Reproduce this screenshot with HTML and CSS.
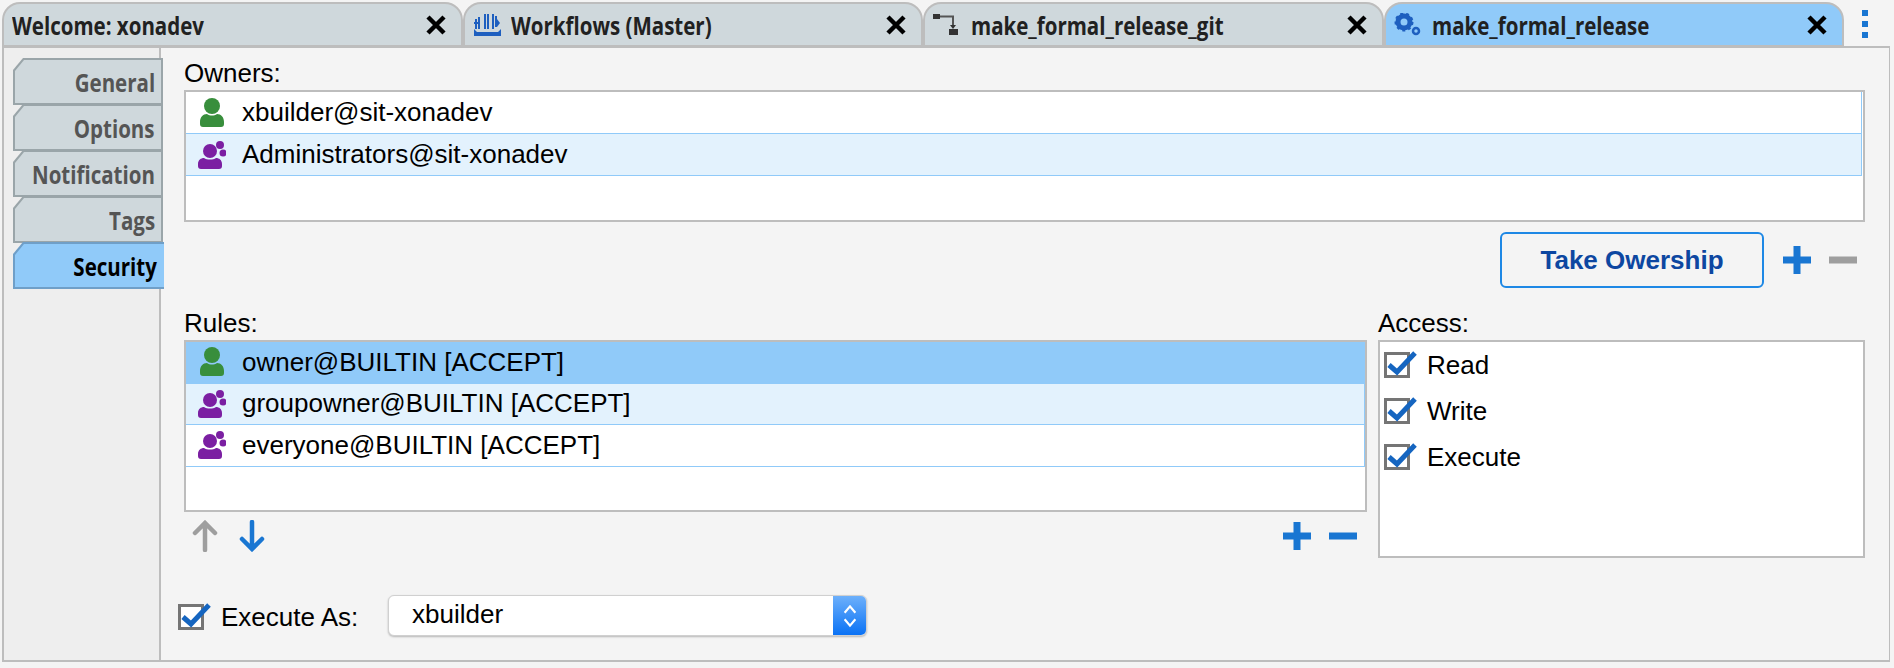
FILE: index.html
```html
<!DOCTYPE html>
<html lang="en">
<head>
  <meta charset="UTF-8">
  <title>make_formal_release</title>
  <link rel="stylesheet" href="styles.css">
</head>
<body>
  <svg class="defs" width="0" height="0">
    <symbol id="user" viewBox="0 0 26 30">
      <circle cx="13" cy="8" r="8" fill="#388e3c"/>
      <path d="M1 24c0-5 3-8 7-8 3 2 7 2 10 0 4 0 7 3 7 8v2c0 2-1 3-3 3H4c-2 0-3-1-3-3z" fill="#388e3c"/>
    </symbol>
    <symbol id="group" viewBox="0 0 28 30">
      <circle cx="12" cy="11" r="7" fill="#7b1fa2"/>
      <circle cx="22" cy="5" r="4" fill="#7b1fa2"/>
      <circle cx="25" cy="13" r="3.5" fill="#7b1fa2"/>
      <path d="M0 24c0-4 3-6 6-6 3 2 9 2 12 0 3 0 6 2 6 6v2c0 2-1 3-3 3H3c-2 0-3-1-3-3z" fill="#7b1fa2"/>
    </symbol>
    <symbol id="check" viewBox="0 0 33 28">
      <rect x="1.5" y="2.5" width="23" height="23" fill="#fff" stroke="#757575" stroke-width="3"/>
      <path d="M5 14l8 7L31 2" fill="none" stroke="#1565c0" stroke-width="5"/>
    </symbol>
    <symbol id="close" viewBox="0 0 22 22">
      <path d="M3 3l16 16M19 3L3 19" stroke="#000" stroke-width="4.5"/>
    </symbol>
    <symbol id="plus" viewBox="0 0 24 24">
      <path d="M0 12h24M12 0v24" stroke="#1976d2" stroke-width="6"/>
    </symbol>
    <symbol id="minus" viewBox="0 0 24 24">
      <path d="M0 12h24" stroke="currentColor" stroke-width="6"/>
    </symbol>
  </svg>

  <div class="tabbar">
    <div class="tab">
      <span class="tab-title">Welcome: xonadev</span>
      <svg class="tab-close"><use href="#close"/></svg>
    </div>
    <div class="tab">
      <svg class="tab-icon" viewBox="0 0 28 24">
        <path d="M3 6v10M6 4v12M12 1v15M15 1v15M20 1v15M23 3v11" stroke="#1e5fbf" stroke-width="2"/>
        <path d="M1 9h5v2H1zM24 6l3 4-3 4z" fill="#1e5fbf"/>
        <path d="M1 16v7h27v-7l-3 3H4z" fill="#1e5fbf"/>
      </svg>
      <span class="tab-title">Workflows (Master)</span>
      <svg class="tab-close"><use href="#close"/></svg>
    </div>
    <div class="tab">
      <svg class="tab-icon" viewBox="0 0 28 24">
        <rect x="0" y="1" width="7" height="5" fill="#333"/>
        <path d="M7 3.5h13V14" fill="none" stroke="#555" stroke-width="2"/>
        <path d="M17 12h6l-3 4z" fill="#333"/>
        <rect x="16" y="16" width="9" height="6" fill="#333"/>
      </svg>
      <span class="tab-title">make_formal_release_git</span>
      <svg class="tab-close"><use href="#close"/></svg>
    </div>
    <div class="tab active">
      <svg class="tab-icon" viewBox="0 0 28 24">
        <circle cx="10" cy="9" r="6" fill="none" stroke="#1e5fbf" stroke-width="5"/>
        <circle cx="10" cy="9" r="8.5" fill="none" stroke="#1e5fbf" stroke-width="2" stroke-dasharray="3 3"/>
        <circle cx="22" cy="18" r="3" fill="none" stroke="#1e5fbf" stroke-width="2.5"/>
      </svg>
      <span class="tab-title">make_formal_release</span>
      <svg class="tab-close"><use href="#close"/></svg>
    </div>
    <div class="tab-menu"><i></i><i></i><i></i></div>
  </div>

  <div class="panel">
    <div class="sidebar">
      <div class="side-tab"><span><b>General</b></span></div>
      <div class="side-tab"><span><b>Options</b></span></div>
      <div class="side-tab"><span><b>Notification</b></span></div>
      <div class="side-tab"><span><b>Tags</b></span></div>
      <div class="side-tab active"><span><b>Security</b></span></div>
    </div>

    <div class="content">
      <div class="field-label">Owners:</div>
      <div class="list owners">
        <div class="row"><svg class="row-icon"><use href="#user"/></svg>xbuilder@sit-xonadev</div>
        <div class="row hilite"><svg class="row-icon"><use href="#group"/></svg>Administrators@sit-xonadev</div>
      </div>

      <div class="owner-actions">
        <button class="take-btn">Take Owership</button>
        <svg class="tool-icon"><use href="#plus"/></svg>
        <svg class="tool-icon muted"><use href="#minus"/></svg>
      </div>

      <div class="rules-grid">
        <div>
          <div class="field-label">Rules:</div>
          <div class="list rules">
            <div class="row selected"><svg class="row-icon"><use href="#user"/></svg>owner@BUILTIN [ACCEPT]</div>
            <div class="row hilite"><svg class="row-icon"><use href="#group"/></svg>groupowner@BUILTIN [ACCEPT]</div>
            <div class="row"><svg class="row-icon"><use href="#group"/></svg>everyone@BUILTIN [ACCEPT]</div>
          </div>
          <div class="rule-tools">
            <svg class="arrow" viewBox="0 0 26 32"><path d="M13 30V3M3 13L13 3l10 10" fill="none" stroke="#9e9e9e" stroke-width="4.5" stroke-linecap="round"/></svg>
            <svg class="arrow" viewBox="0 0 26 32"><path d="M13 2v27M3 19l10 10 10-10" fill="none" stroke="#1976d2" stroke-width="4.5" stroke-linecap="round"/></svg>
            <span class="spacer"></span>
            <svg class="tool-icon"><use href="#plus"/></svg>
            <svg class="tool-icon blue"><use href="#minus"/></svg>
          </div>
        </div>
        <div>
          <div class="field-label">Access:</div>
          <div class="list access">
            <div class="check-row"><svg class="check"><use href="#check"/></svg>Read</div>
            <div class="check-row"><svg class="check"><use href="#check"/></svg>Write</div>
            <div class="check-row"><svg class="check"><use href="#check"/></svg>Execute</div>
          </div>
        </div>
      </div>

      <div class="exec-row">
        <svg class="check"><use href="#check"/></svg>
        <span class="exec-label">Execute As:</span>
        <div class="select">
          <span class="select-value">xbuilder</span>
          <span class="select-arrows">
            <svg viewBox="0 0 14 26" width="16" height="28"><path d="M2 10l5-6 5 6M2 16l5 6 5-6" fill="none" stroke="#fff" stroke-width="2"/></svg>
          </span>
        </div>
      </div>
    </div>
  </div>
</body>
</html>
```

FILE: styles.css
```css
/* Page */
html, body {
  margin: 0;
  height: 668px;
  overflow: hidden;
  background-color: #f4f4f4;
  font-family: "Liberation Sans", Arial, sans-serif;
  font-size: 26px;
  color: #000;
}

.defs {
  display: block;
}

/* Top tabs */
.tabbar {
  display: flex;
  height: 46px;
  padding-left: 2px;
  box-sizing: border-box;
}

.tab {
  display: flex;
  align-items: center;
  box-sizing: border-box;
  width: 460.5px;
  height: 44px;
  margin-top: 2px;
  padding: 0 14px 0 8px;
  background-color: #cfd8dc;
  border: 2px solid #bdbdbd;
  border-bottom-width: 1px;
  border-radius: 18px 18px 0 0;
}

.tab.active {
  background-color: #90caf9;
}

.tab-title {
  flex: 1;
  font-family: "Open Sans", sans-serif;
  font-weight: 700;
  font-size: 25px;
  color: #212121;
  transform: scaleX(0.82);
  transform-origin: left center;
  white-space: nowrap;
}

.tab-icon {
  width: 28px;
  height: 24px;
  margin-right: 10px;
  flex: none;
}

.tab-close {
  width: 22px;
  height: 22px;
  flex: none;
}

.tab-menu {
  display: flex;
  flex-direction: column;
  gap: 5px;
  margin: 10px 0 0 18px;
}

.tab-menu i {
  display: block;
  width: 6px;
  height: 6px;
  background-color: #1976d2;
}

/* Panel */
.panel {
  display: flex;
  box-sizing: border-box;
  width: 1888px;
  height: 616px;
  margin-left: 2px;
  background-color: #f4f4f4;
  border: 2px solid #bdbdbd;
  border-right-width: 1px;
}

.sidebar {
  flex: none;
  box-sizing: border-box;
  width: 157px;
  padding: 10px 0 0 9px;
  background-color: #eeeeee;
  border-right: 2px solid #bdbdbd;
}

.side-tab {
  width: 150px;
  height: 47px;
  margin-bottom: -1px;
  box-sizing: border-box;
  padding: 2px;
  background-color: #9aa5a9;
  clip-path: polygon(10px 0, 100% 0, 100% 100%, 0 100%, 0 12px);
}

.side-tab span {
  display: flex;
  justify-content: flex-end;
  height: 100%;
  box-sizing: border-box;
  padding-right: 6px;
  background-color: #cfd8dc;
  clip-path: polygon(9px 0, 100% 0, 100% 100%, 0 100%, 0 11px);
  line-height: 44px;
}

.side-tab b {
  flex: none;
  font-family: "Open Sans", sans-serif;
  font-weight: 700;
  font-size: 25px;
  color: #555;
  transform: scaleX(0.82);
  transform-origin: right center;
}

.side-tab.active {
  width: 151px;
  background-color: #6f9fc8;
  padding-right: 0;
}

.side-tab.active span {
  padding-right: 7px;
  background-color: #90caf9;
}

.side-tab.active b {
  color: #000;
}

/* Content */
.content {
  flex: 1;
  padding: 14px 24px 0 23px;
}

.field-label {
  height: 28px;
  line-height: 22px;
}

.list {
  box-sizing: border-box;
  background-color: #fff;
  border: 2px solid #bdbdbd;
}

.owners {
  height: 132px;
  padding-right: 1px;
}

.rules {
  height: 172px;
}

.access {
  height: 218px;
}

.row {
  display: flex;
  align-items: center;
  box-sizing: border-box;
  height: 42px;
  border-bottom: 1px solid #90caf9;
  border-right: 1px solid #90caf9;
}

.rules .row {
  height: 41.5px;
}

.row.hilite {
  background-color: #e3f2fd;
}

.row.selected {
  background-color: #90caf9;
}

.row-icon {
  width: 28px;
  height: 30px;
  margin: 0 16px 0 12px;
  flex: none;
}

.owner-actions {
  display: flex;
  align-items: center;
  justify-content: flex-end;
  height: 56px;
  margin: 10px 0 24px;
  padding-right: 8px;
}

.take-btn {
  box-sizing: border-box;
  width: 264px;
  height: 56px;
  margin-right: 19px;
  background: transparent;
  border: 2px solid #1e88e5;
  border-radius: 6px;
  font-family: "Liberation Sans", Arial, sans-serif;
  font-weight: 700;
  font-size: 26px;
  color: #0d47a1;
}

.tool-icon {
  width: 28px;
  height: 28px;
  flex: none;
  color: #9e9e9e;
}

.tool-icon + .tool-icon {
  margin-left: 18px;
}

.tool-icon.blue {
  color: #1976d2;
}

.rules-grid {
  display: grid;
  grid-template-columns: 1183px 487px;
  column-gap: 11px;
}

.rule-tools {
  display: flex;
  align-items: center;
  height: 48px;
  padding: 0 10px 0 8px;
}

.arrow {
  width: 26px;
  height: 32px;
  margin-right: 21px;
  flex: none;
}

.spacer {
  flex: 1;
}

.check-row {
  display: flex;
  align-items: center;
  height: 46px;
  padding-left: 4px;
}

.check {
  width: 33px;
  height: 28px;
  margin-right: 10px;
  flex: none;
}

.exec-row {
  display: flex;
  align-items: center;
  margin: 35px 0 0 -6px;
}

.exec-row .check {
  margin-top: 2px;
}

.exec-label {
  width: 167px;
  padding-top: 4px;
}

.select {
  display: flex;
  box-sizing: border-box;
  width: 479px;
  height: 41px;
  background-color: #fff;
  border: 1px solid #d0d0d0;
  border-radius: 6px;
  box-shadow: 0 1px 2px rgba(0, 0, 0, 0.25);
  overflow: hidden;
}

.select-value {
  flex: 1;
  padding-left: 23px;
  line-height: 36px;
}

.select-arrows {
  display: flex;
  align-items: center;
  justify-content: center;
  width: 33px;
  background: linear-gradient(#6db0fb, #0a72f5);
}
```
